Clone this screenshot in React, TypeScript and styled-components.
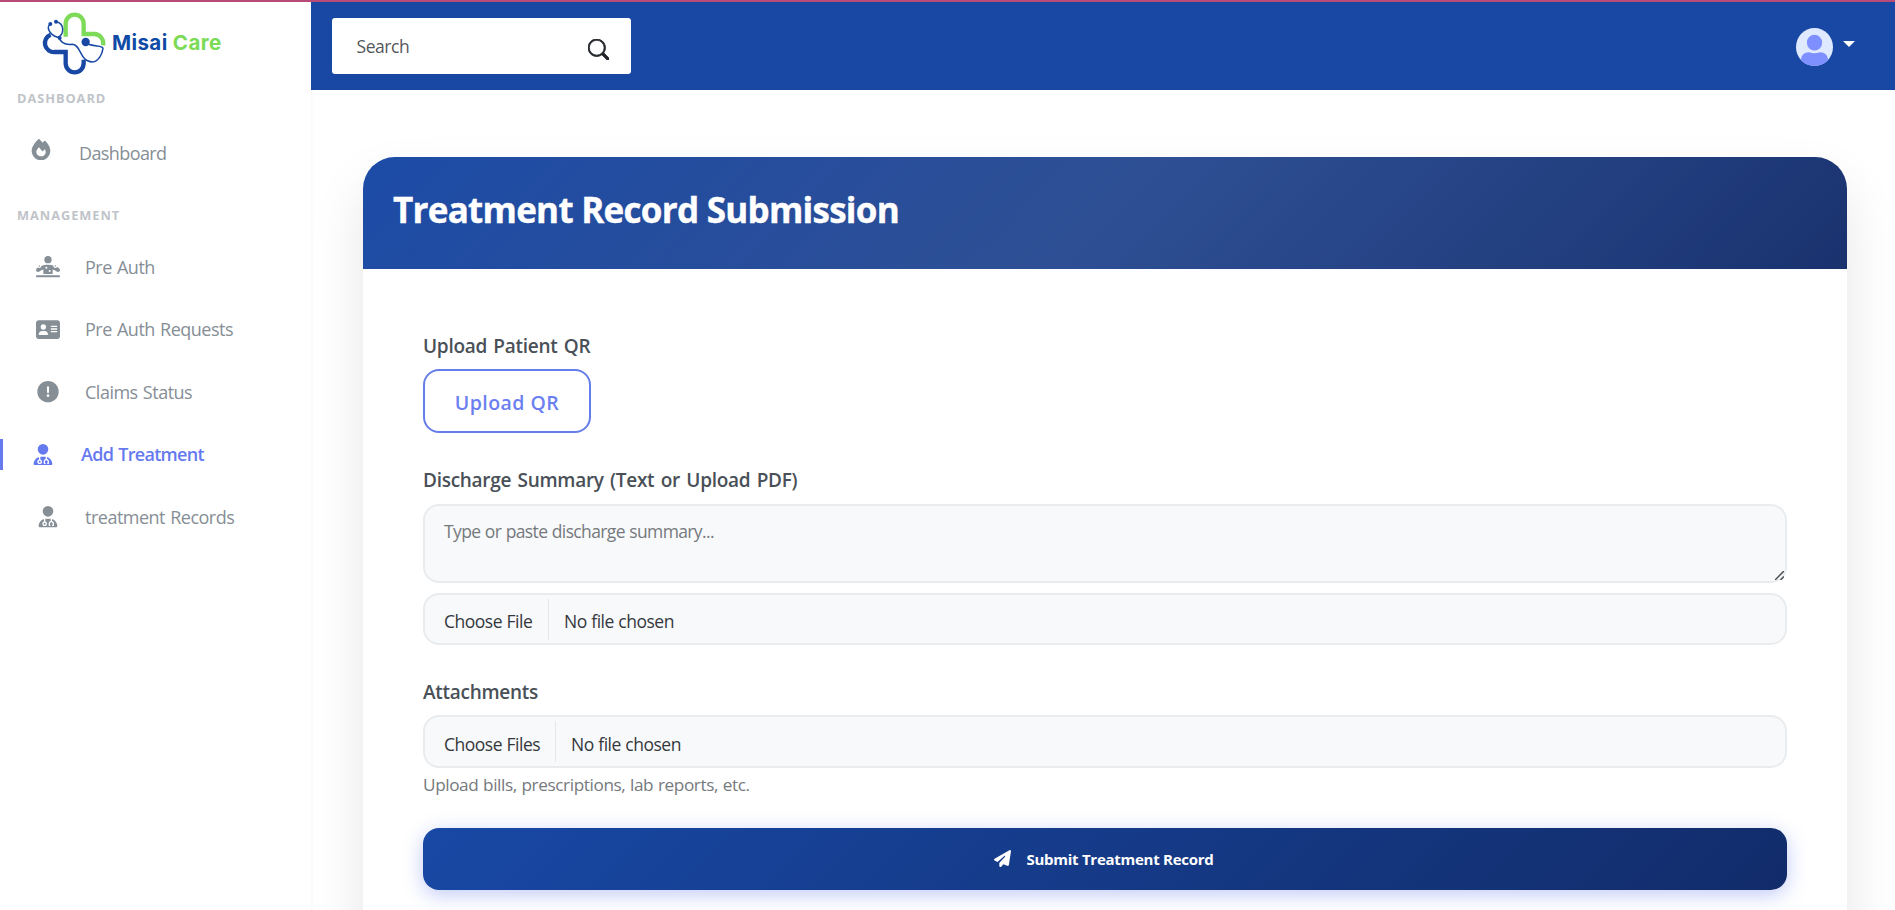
import React from "react";
import styled, { createGlobalStyle } from "styled-components";
import {
  FaAddressCard,
  FaCircleExclamation,
  FaFire,
  FaPaperPlane,
  FaPersonDotsFromLine,
  FaUserDoctor,
} from "react-icons/fa6";
import { BsSearch } from "react-icons/bs";

const GlobalStyle = createGlobalStyle`
  *, *::before, *::after { box-sizing: border-box; }
  body {
    margin: 0;
    overflow: hidden;
    background: #fff;
    color: #212529;
    font-family: "Open Sans", "Noto Sans", sans-serif;
  }
`;

const Page = styled.div`
  height: 910px;
  display: flex;
  flex-direction: column;
  overflow: hidden;
`;

const ProgressStrip = styled.div`
  flex: none;
  height: 2px;
  background: #b84a78;
`;

const Shell = styled.div`
  flex: 1;
  min-height: 0;
  display: flex;
`;

const Sidebar = styled.aside`
  flex: none;
  width: 311px;
  background: #fff;
`;

const Brand = styled.div`
  height: 77px;
  padding: 8px 0 0 42px;
  display: flex;
  align-items: flex-start;
`;

const BrandName = styled.div`
  margin: 19px 0 0 6px;
  font-family: Inter, sans-serif;
  font-size: 20.5px;
  line-height: 28px;
  font-weight: 700;
  letter-spacing: 0.4px;
  color: #0f4aa6;
  white-space: nowrap;
  span { color: #7bdb57; }
`;

const SectionTitle = styled.div`
  padding-left: 17px;
  font-size: 12.8px;
  line-height: 38px;
  font-weight: 700;
  letter-spacing: 0.95px;
  color: #bfc4c9;
`;

const NavGroup = styled.nav<{ $before?: number; $after?: number }>`
  padding: ${(p) => p.$before ?? 0}px 0 ${(p) => p.$after ?? 0}px;
`;

const NavItem = styled.a<{ $active?: boolean; $root?: boolean }>`
  height: 62.5px;
  padding-left: ${(p) => (p.$root ? 28 : p.$active ? 27 : 35)}px;
  display: flex;
  align-items: center;
  position: relative;
  font-size: 18px;
  font-weight: ${(p) => (p.$active ? 600 : 400)};
  letter-spacing: ${(p) => (p.$active ? "-0.7px" : p.$root ? "-0.6px" : "-0.5px")};
  word-spacing: 1px;
  color: ${(p) => (p.$active ? "#667af0" : "#868e96")};
  &::before {
    content: "";
    display: ${(p) => (p.$active ? "block" : "none")};
    position: absolute;
    left: 0;
    top: 16px;
    width: 3px;
    height: 31px;
    background: #667af0;
  }
`;

const NavIcon = styled.span<{ $active?: boolean; $root?: boolean }>`
  flex: none;
  width: ${(p) => (p.$active ? 32 : 25)}px;
  margin-right: ${(p) => (p.$root ? 26 : p.$active ? 22 : 25)}px;
  margin-bottom: ${(p) => (p.$root ? 7 : 0)}px;
  display: flex;
  justify-content: center;
  svg { flex: none; width: 24px; height: 21.33px; }
`;

const Main = styled.div`
  flex: 1;
  min-width: 0;
  display: flex;
  flex-direction: column;
  background: #fff;
`;

const TopBar = styled.header`
  flex: none;
  height: 88px;
  padding: 0 40px 0 21px;
  display: flex;
  align-items: center;
  justify-content: space-between;
  background: #1848a4;
`;

const SearchBox = styled.div`
  width: 299px;
  height: 56px;
  margin-bottom: 1px;
  padding: 0 22px 0 24.5px;
  display: flex;
  align-items: center;
  justify-content: space-between;
  border-radius: 3px;
  background: #fff;
  font-size: 17.5px;
  letter-spacing: -0.45px;
  color: #54585c;
  svg {
    width: 21.5px;
    height: 21.5px;
    margin-top: 8px;
    color: #212529;
    stroke-width: 0.6px;
    stroke: currentColor;
  }
`;

const Account = styled.div`
  margin-top: 2px;
  display: flex;
  align-items: center;
  gap: 10px;
`;

const Caret = styled.i`
  margin-bottom: 6px;
  border: 6px solid transparent;
  border-top-color: #fff;
  border-bottom: 0;
`;

const Content = styled.main`
  flex: 1;
  min-height: 0;
  padding: 67.4px 48px 0 52px;
  overflow: hidden;
  box-shadow: inset 4px 0 3px -2px #fafafa;
`;

const Card = styled.section`
  height: 860px;
  border-radius: 32px;
  background: #fff;
  box-shadow: 0 27px 54px rgba(0, 0, 0, 0.1);
`;

const CardHeader = styled.div`
  height: 112px;
  padding: 0 30px 6px;
  display: flex;
  align-items: center;
  border-radius: 32px 32px 0 0;
  background:
    linear-gradient(135deg, rgba(255, 255, 255, 0.02), rgba(255, 255, 255, 0.11) 50%, rgba(255, 255, 255, 0.03)),
    linear-gradient(135deg, #1848a5, #122c6a);
`;

const Title = styled.h1`
  margin: 0;
  font-size: 35px;
  line-height: 48px;
  font-weight: 700;
  letter-spacing: -0.73px;
  color: #fff;
  -webkit-text-stroke: 0.4px #fff;
`;

const Form = styled.div`
  padding: 60px 60px 0;
`;

const Label = styled.label<{ $drop?: number }>`
  display: block;
  height: 39.7px;
  padding-top: ${(p) => p.$drop ?? 3}px;
  font-size: 19px;
  line-height: 26px;
  font-weight: 600;
  letter-spacing: -0.28px;
  word-spacing: 1.7px;
  color: #495057;
`;

const OutlineButton = styled.button`
  display: block;
  width: 168px;
  height: 64px;
  margin-bottom: 31px;
  padding: 3px 0 0;
  border: 2px solid #667eea;
  border-radius: 16px;
  background: #fff;
  font: 600 19.5px/28px "Open Sans", sans-serif;
  letter-spacing: 0.45px;
  color: #6b7ff0;
`;

const fieldLook = `
  border: 2px solid #e9ecef;
  border-radius: 16px;
  background: #f8f9fb;
  font-size: 17.5px;
`;

const SummaryWrap = styled.div`
  position: relative;
  margin-bottom: 10px;
`;

const SummaryInput = styled.textarea`
  ${fieldLook}
  display: block;
  width: 100%;
  height: 79.5px;
  padding: 11px 19px;
  resize: none;
  outline: 0;
  font-family: inherit;
  line-height: 28px;
  letter-spacing: -0.63px;
  word-spacing: 0.5px;
  &::placeholder { color: #75797d; opacity: 1; }
`;

const ResizeGrip = styled.svg`
  position: absolute;
  right: 3px;
  bottom: 3px;
`;

const FileField = styled.div<{ $gap?: number; $tall?: boolean }>`
  ${fieldLook}
  height: ${(p) => (p.$tall ? 53 : 52)}px;
  margin-bottom: ${(p) => p.$gap ?? 0}px;
  padding: 4px 19px;
  display: flex;
  letter-spacing: -0.5px;
  word-spacing: 0.5px;
  line-height: ${(p) => (p.$tall ? 46.5 : 45)}px;
  color: #34383c;
`;

const FileButton = styled.span<{ $width: number }>`
  flex: none;
  width: ${(p) => p.$width}px;
  height: 41px;
  margin-right: 15px;
  border-right: 1px solid #e4e8eb;
`;

const Hint = styled.div`
  height: 59.5px;
  padding-top: 2.5px;
  font-size: 17.2px;
  line-height: 28px;
  letter-spacing: -0.4px;
  word-spacing: 0.6px;
  color: #75797d;
`;

const SubmitButton = styled.button`
  width: 100%;
  height: 62px;
  padding: 0 2px 0 0;
  display: flex;
  align-items: center;
  justify-content: center;
  gap: 15px;
  border: 0;
  border-radius: 16px;
  background: linear-gradient(135deg, #1848a5, #122c6a);
  box-shadow: 0 5px 20px rgba(102, 126, 234, 0.4);
  font: 700 15px/24px "Open Sans", sans-serif;
  letter-spacing: -0.26px;
  color: #fff;
  svg { width: 17px; height: 17px; }
`;

const LogoMark = () => (
  <svg width="64" height="66" viewBox="123 30 192 198" fill="none">
    <path d="M194 110V71A27 27 0 0 1 248 71V102H280A27 28 0 0 1 306 136" stroke="#7edb59" strokeWidth="13" />
    <path d="M149 104A27 27 0 0 0 162 156H194V190A27 27 0 0 0 248 190V179" stroke="#1848a4" strokeWidth="13" />
    <g stroke="#1848a4" strokeWidth="4.5" strokeLinecap="round">
      <path d="M148 72C136 80 143 104 170 112C190 104 192 70 165 65" />
      <path d="M174 112C180 132 197 135 214 133C241 134 236 186 274 186C294 184 304 160 306 145C306 136 283 140 262 133" />
    </g>
    <g fill="#1848a4">
      <circle cx="148" cy="72" r="6" />
      <circle cx="165" cy="65" r="6" />
      <circle cx="176" cy="114" r="6" />
      <circle cx="254" cy="126" r="12.5" />
    </g>
  </svg>
);

const Avatar = () => (
  <svg width="37" height="38" viewBox="0 0 37 38">
    <defs>
      <clipPath id="avatar-clip">
        <ellipse cx="18.5" cy="19" rx="18.5" ry="19" />
      </clipPath>
    </defs>
    <g clipPath="url(#avatar-clip)">
      <rect width="37" height="38" fill="#dfe9ff" />
      <ellipse cx="18.5" cy="14.7" rx="7.6" ry="7.9" fill="#7e8fff" />
      <path d="M5 38V31Q6 24.3 13 24.3Q18.5 26 24 24.3Q31 24.3 32 31V38Z" fill="#7e8fff" />
    </g>
  </svg>
);

const managementLinks = [
  { label: "Pre Auth", Icon: FaPersonDotsFromLine },
  { label: "Pre Auth Requests", Icon: FaAddressCard },
  { label: "Claims Status", Icon: FaCircleExclamation },
  { label: "Add Treatment", Icon: FaUserDoctor, active: true },
  { label: "treatment Records", Icon: FaUserDoctor },
];

export default function App() {
  return (
    <Page>
      <GlobalStyle />
      <ProgressStrip />
      <Shell>
        <Sidebar>
          <Brand>
            <LogoMark />
            <BrandName>
              Misai <span>Care</span>
            </BrandName>
          </Brand>
          <SectionTitle>DASHBOARD</SectionTitle>
          <NavGroup $before={5} $after={11.5}>
            <NavItem $root>
              <NavIcon $root><FaFire /></NavIcon>
              Dashboard
            </NavItem>
          </NavGroup>
          <SectionTitle>MANAGEMENT</SectionTitle>
          <NavGroup $before={1.7}>
            {managementLinks.map(({ label, Icon, active }) => (
              <NavItem key={label} $active={active}>
                <NavIcon $active={active}><Icon /></NavIcon>
                {label}
              </NavItem>
            ))}
          </NavGroup>
        </Sidebar>
        <Main>
          <TopBar>
            <SearchBox>
              Search
              <BsSearch />
            </SearchBox>
            <Account>
              <Avatar />
              <Caret />
            </Account>
          </TopBar>
          <Content>
            <Card>
              <CardHeader>
                <Title>Treatment Record Submission</Title>
              </CardHeader>
              <Form>
                <Label $drop={4}>Upload Patient QR</Label>
                <OutlineButton type="button">Upload QR</OutlineButton>
                <Label>Discharge Summary (Text or Upload PDF)</Label>
                <SummaryWrap>
                  <SummaryInput placeholder="Type or paste discharge summary..." />
                  <ResizeGrip width="9" height="9" viewBox="0 0 9 9" stroke="#4a4d50" strokeWidth="1.5">
                    <path d="M0 9L9 0M5.5 9L9 5.5" />
                  </ResizeGrip>
                </SummaryWrap>
                <FileField $gap={30.5}>
                  <FileButton $width={105}>Choose File</FileButton>
                  No file chosen
                </FileField>
                <Label>Attachments</Label>
                <FileField $tall>
                  <FileButton $width={112}>Choose Files</FileButton>
                  No file chosen
                </FileField>
                <Hint>Upload bills, prescriptions, lab reports, etc.</Hint>
                <SubmitButton type="button">
                  <FaPaperPlane />
                  Submit Treatment Record
                </SubmitButton>
              </Form>
            </Card>
          </Content>
        </Main>
      </Shell>
    </Page>
  );
}
